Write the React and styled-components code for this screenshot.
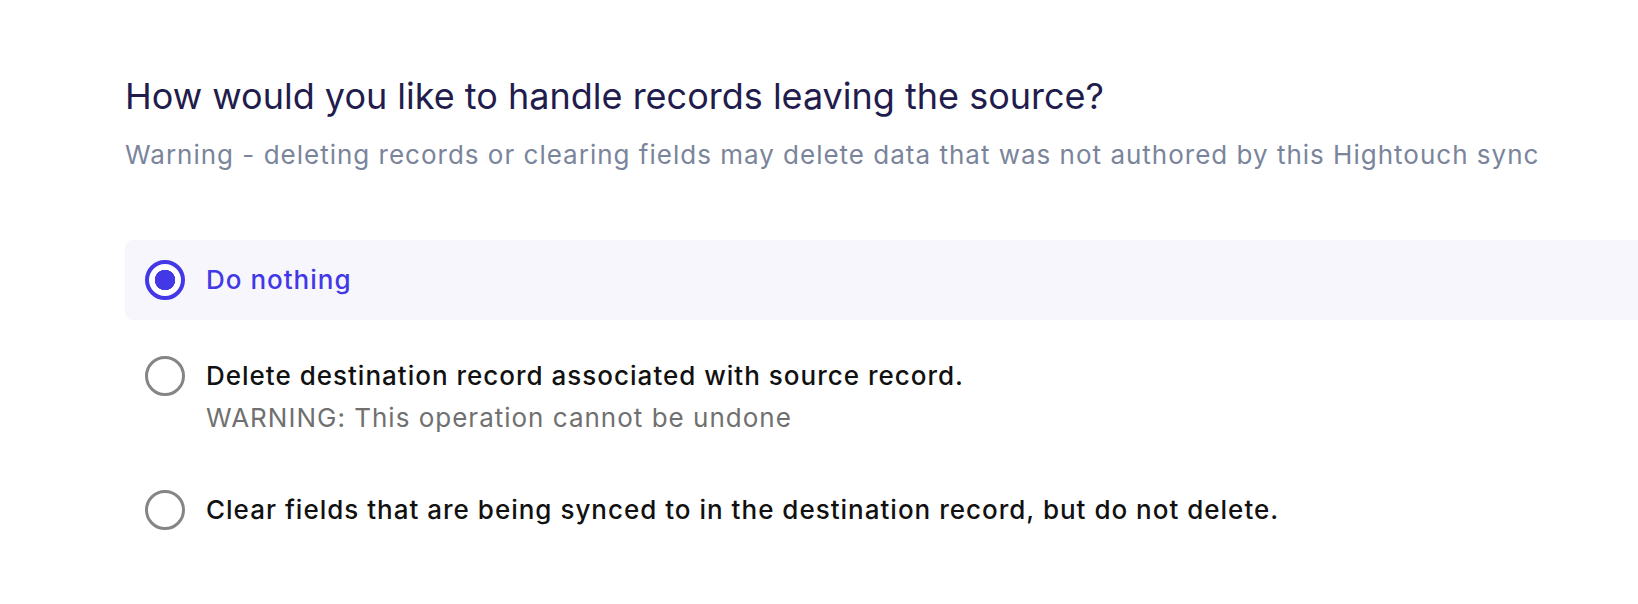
import React, { useState } from 'react'
import styled, { createGlobalStyle } from 'styled-components'

const GlobalStyle = createGlobalStyle`
    body {
        margin: 0;
        background: #ffffff;
        font-family: Inter, "Noto Sans", sans-serif;
    }
`

const options = [
    { id: 'nothing', label: 'Do nothing' },
    {
        id: 'delete',
        label: 'Delete destination record associated with source record.',
        hint: 'WARNING: This operation cannot be undone',
    },
    {
        id: 'clear',
        label: 'Clear fields that are being synced to in the destination record, but do not delete.',
    },
]

function App() {
    const [selected, setSelected] = useState('nothing')

    return (
        <>
            <GlobalStyle />
            <Container>
                <Title>How would you like to handle records leaving the source?</Title>
                <Description>
                    Warning - deleting records or clearing fields may delete data that was not authored by this Hightouch sync
                </Description>
                <OptionList>
                    {options.map((option) => (
                        <Option
                            key={option.id}
                            $active={selected === option.id}
                            onClick={() => setSelected(option.id)}
                        >
                            <Radio $active={selected === option.id} />
                            <OptionText>
                                <Label $active={selected === option.id}>{option.label}</Label>
                                {option.hint && <Hint>{option.hint}</Hint>}
                            </OptionText>
                        </Option>
                    ))}
                </OptionList>
            </Container>
        </>
    )
}

const Container = styled.div`
    padding: 72px 0 0 125px;
    box-sizing: border-box;
`
const Title = styled.h2`
    margin: 0;
    font-size: 36px;
    line-height: 48px;
    font-weight: 400;
    color: #221c4d;
`
const Description = styled.p`
    margin: 18px 0 0;
    font-size: 26px;
    line-height: 34px;
    letter-spacing: 1px;
    color: #7a859b;
`
const OptionList = styled.div`
    display: flex;
    flex-direction: column;
    gap: 16px;
    margin-top: 68px;
`
const Option = styled.div`
    display: flex;
    align-items: flex-start;
    gap: 21px;
    padding: 20px;
    border-radius: 8px 0 0 8px;
    background: ${(p) => (p.$active ? '#f7f6fd' : 'transparent')};
    cursor: pointer;
`
const Radio = styled.span`
    flex: none;
    width: 40px;
    height: 40px;
    box-sizing: border-box;
    border-radius: 50%;
    border: ${(p) => (p.$active ? '4px solid #4338e6' : '3.5px solid #858585')};
    background: ${(p) =>
        p.$active ? 'radial-gradient(circle, #4338e6 0 10px, #ffffff 10.5px)' : '#ffffff'};
`
const OptionText = styled.div`
    display: flex;
    flex-direction: column;
`
const Label = styled.span`
    font-size: 26px;
    line-height: 40px;
    font-weight: 500;
    letter-spacing: 1px;
    color: ${(p) => (p.$active ? '#4338e6' : '#111111')};
`
const Hint = styled.span`
    margin-top: 5px;
    font-size: 26px;
    line-height: 33px;
    letter-spacing: 1px;
    color: #707070;
`

export default App
